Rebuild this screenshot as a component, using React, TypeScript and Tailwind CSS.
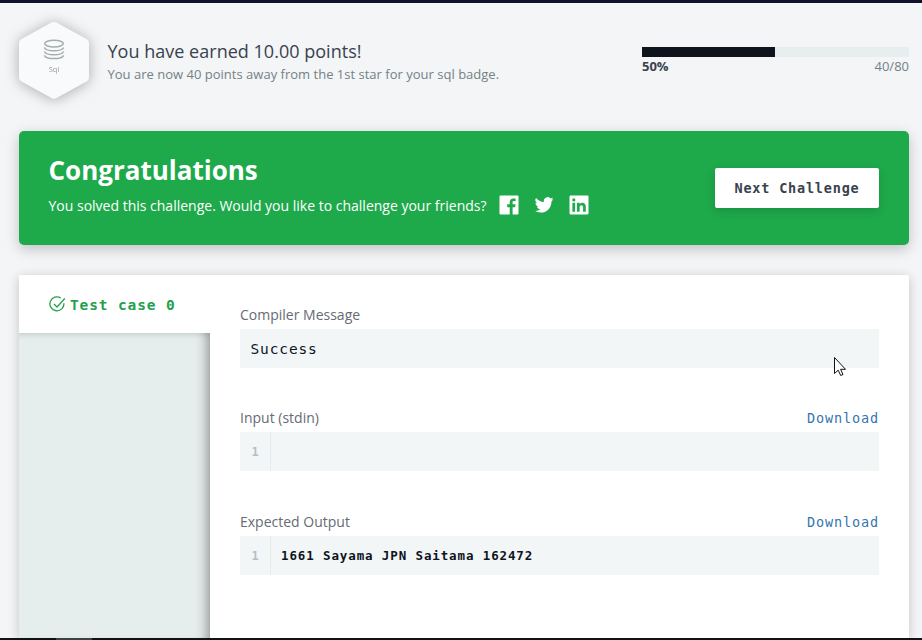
import type { ReactNode } from "react";

const mono = "font-['DejaVu_Sans_Mono',monospace]";

function Badge() {
  return (
    <svg
      width="72"
      height="80"
      viewBox="0 0 72 80"
      className="shrink-0 overflow-visible drop-shadow-[0_1px_7px_rgba(0,0,0,0.3)]"
    >
      <path
        d="M33.500 2.600Q36 1.500 38.500 2.600L68.500 19Q71 20.400 71 23V57.500Q71 60 68.500 61.500L38.500 78Q36 79.400 33.500 78L3.500 61.500Q1 60 1 57.500V23Q1 20.400 3.500 19Z"
        fill="#f8fafb"
      />
      <g fill="none" stroke="#a6adad" strokeWidth="1.5">
        <ellipse cx="36" cy="23.600" rx="9.300" ry="3.300" />
        <path d="M26.300 27.500C28.500 31.900 43.500 31.900 45.700 27.500M26.300 31.500C28.500 35.900 43.500 35.900 45.700 31.500M26.300 35.300C28.500 39.700 43.500 39.700 45.700 35.300" />
      </g>
      <text x="36" y="52" textAnchor="middle" fontSize="7.500" fill="#979e9e" className="font-['Open_Sans',sans-serif]">
        Sql
      </text>
    </svg>
  );
}

function SocialIcons() {
  return (
    <span className="mb-[2px] ml-3 flex items-center gap-[15px] text-white">
      <svg width="20" height="20" viewBox="0 0 20 20" fill="currentColor">
        <path d="M1.500.5h17a1 1 0 0 1 1 1v17a1 1 0 0 1-1 1h-4.900v-7.300h2.500l.4-2.900h-2.900V7.500c0-.9.300-1.400 1.500-1.400h1.500V3.500c-.3 0-1.200-.1-2.200-.1-2.300 0-3.700 1.400-3.700 3.700v2.200H8.200v2.900h2.500v7.300H1.500a1 1 0 0 1-1-1v-17a1 1 0 0 1 1-1Z" />
      </svg>
      <svg width="20" height="20" viewBox="0 0 24 24" fill="currentColor">
        <path d="M23.300 4.900c-.8.400-1.700.6-2.600.7.900-.6 1.600-1.500 2-2.500-.9.500-1.900.9-2.900 1.100a4.600 4.600 0 0 0-7.900 4.200C8 8.200 4.700 6.400 2.400 3.600a4.600 4.600 0 0 0 1.400 6.200c-.7 0-1.400-.2-2.100-.6v.1c0 2.200 1.600 4.100 3.700 4.500-.7.200-1.400.2-2.100.1.600 1.800 2.300 3.200 4.300 3.200A9.300 9.300 0 0 1 .8 19a13 13 0 0 0 7.100 2.100c8.500 0 13.400-7.200 13.100-13.700.9-.7 1.700-1.500 2.300-2.500Z" />
      </svg>
      <svg width="20" height="20" viewBox="0 0 20 20" fill="currentColor" fillRule="evenodd">
        <path d="M1.700.5h16.600c.7 0 1.200.5 1.200 1.200v16.600c0 .7-.5 1.200-1.200 1.200H1.700c-.7 0-1.200-.5-1.200-1.200V1.700C.5 1 1 .5 1.700.5ZM3.400 7.800v9h2.700v-9ZM4.800 3.300a1.600 1.600 0 1 0 0 3.200 1.600 1.600 0 0 0 0-3.200ZM7.900 7.800v9h2.700v-4.400c0-2.900 3.500-3 3.500 0v4.400h2.700v-5.200c0-4.500-4.400-4.900-6.200-2.500V7.800Z" />
      </svg>
    </span>
  );
}

function Field({ label, download, children }: { label: string; download?: boolean; children: ReactNode }) {
  return (
    <section>
      <div className="flex h-[29px] items-center justify-between">
        <h3 className="text-[14px] text-[#666b74]">{label}</h3>
        {download && (
          <a className={`${mono} pt-px text-[13.5px] tracking-[0.88px] text-[#3575b0]`}>Download</a>
        )}
      </div>
      <div className="flex h-[39px] items-center bg-[#f3f6f7]">{children}</div>
    </section>
  );
}

function LineNumber() {
  return (
    <span
      className={`${mono} flex h-full w-[31px] items-center justify-center border-r border-[#e4ebeb] text-[12px] font-bold text-[#b9bfbf]`}
    >
      1
    </span>
  );
}

export default function App() {
  return (
    <div className="relative flex h-[640px] w-[922px] flex-col overflow-hidden bg-[#f3f5f7] font-['Open_Sans',sans-serif]">
      <div className="h-[3px] shrink-0 bg-[#0f132d]" />
      <header className="flex h-[128px] shrink-0 items-start pr-[13px] pl-[18px]">
        <div className="mt-[17px]">
          <Badge />
        </div>
        <div className="mt-[35px] ml-[17.5px] flex-1">
          <h2 className="text-[18px] leading-[26px] tracking-[0.02px] text-[#39424e]">You have earned 10.00 points!</h2>
          <p className="text-[13px] leading-[20px] tracking-[0.01px] text-[#738285]">
            You are now 40 points away from the 1st star for your sql badge.
          </p>
        </div>
        <div className="mt-[44px] w-[267px]">
          <div className="h-[10px] bg-[#e7eeee]">
            <div className="h-full w-[133px] bg-[#0d141e]" />
          </div>
          <div className="flex justify-between text-[13px] leading-[19px]">
            <span className="font-bold text-[#39424e]">50%</span>
            <span className="text-[#738285]">40/80</span>
          </div>
        </div>
      </header>

      <section className="mr-[13px] ml-[19px] flex h-[114px] shrink-0 items-center justify-between rounded-[5px] bg-[#1ea94b] pr-[30px] pl-[29.500px] shadow-[0_4px_14px_rgba(0,0,0,0.22)]">
        <div className="pb-[8px] text-white">
          <h1 className="text-[26px] leading-[36px] font-bold">Congratulations</h1>
          <div className="mt-[7px] flex items-center text-[14px] leading-[22px]">
            <span>You solved this challenge. Would you like to challenge your friends?</span>
            <SocialIcons />
          </div>
        </div>
        <button
          className={`${mono} h-[40px] w-[164px] rounded-[2px] bg-white text-[13.5px] font-bold tracking-[0.8px] text-[#39424e] shadow-[0_3px_10px_rgba(0,0,0,0.15)]`}
        >
          Next Challenge
        </button>
      </section>

      <main className="mt-[30px] mr-[13px] ml-[19px] flex min-h-0 flex-1 rounded-t-[2px] bg-white shadow-[0_2px_12px_rgba(0,0,0,0.2)]">
        <aside className="flex w-[191px] shrink-0 flex-col">
          <div className="flex h-[58px] shrink-0 items-center bg-white pl-[30px] text-[#23a24d]">
            <svg width="17" height="17" viewBox="0 0 17 17" fill="none" stroke="currentColor" strokeWidth="1.300">
              <path d="M11.800 2A7 7 0 1 0 14.900 7.200M5 8l3 3 7.800-8.500" />
            </svg>
            <span className={`${mono} ml-1 pt-[3px] text-[14.500px] font-bold tracking-[0.87px]`}>Test case 0</span>
          </div>
          <div className="flex-1 bg-[#e6eeed] shadow-[inset_-12px_0_12px_-9px_rgba(0,0,0,0.38),inset_0_7px_7px_-6px_rgba(0,0,0,0.14)]" />
        </aside>
        <div className="flex flex-1 flex-col px-[30px] pt-[25px]">
          <Field label="Compiler Message">
            <span className={`${mono} pt-[2px] pl-[10.500px] text-[14.500px] tracking-[0.87px] text-[#0d141e]`}>Success</span>
          </Field>
          <div className="mt-[35px] mb-[36px]">
            <Field label="Input (stdin)" download>
              <LineNumber />
            </Field>
          </div>
          <Field label="Expected Output" download>
            <LineNumber />
            <span className={`${mono} pt-px pl-[10px] text-[12.500px] font-bold tracking-[0.880px] text-[#0d141e]`}>
              1661 Sayama JPN Saitama 162472
            </span>
          </Field>
        </div>
      </main>

      <footer className="z-10 flex h-[2px] shrink-0 bg-[#101214]">
        <div className="ml-[56px] w-[36px] bg-[#3b4343]" />
      </footer>

      <svg className="absolute top-[356px] left-[833px] z-20" width="14" height="22" viewBox="0 0 14 22">
        <path d="M1.500 1.500V17.500L5.200 14.200L7.700 19.500L10 18.500L7.600 13.300H12.500Z" fill="white" stroke="#111" strokeWidth="1" />
      </svg>
    </div>
  );
}
